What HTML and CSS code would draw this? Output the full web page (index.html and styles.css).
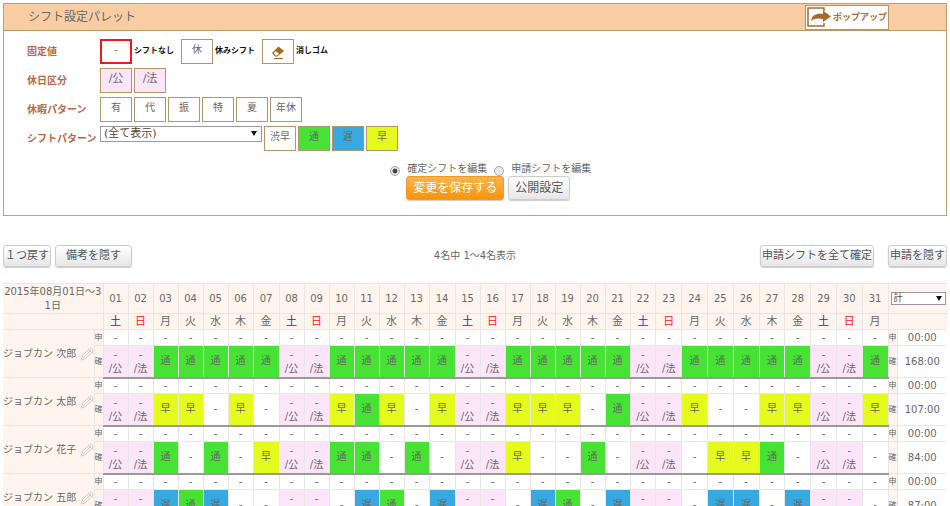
FILE: index.html
```html
<!DOCTYPE html>
<html lang="ja">
<head>
<meta charset="utf-8">
<title>シフト設定パレット</title>
<link rel="stylesheet" href="styles.css">
</head>
<body>
<section class="panel">
  <header class="panel-head">
    <h1>シフト設定パレット</h1>
    <button class="popup" type="button">
      <svg viewBox="0 0 24 20" width="24" height="20" aria-hidden="true">
        <path d="M17 4V1H1V19H17V16" fill="none" stroke="#a66a2c" stroke-width="1.5"/>
        <path d="M4 14C5 8 9 6 16 7V3.500L24 9.500L16 15V12C11 11 7 11 4 14Z" fill="#a66a2c"/>
      </svg>
      <span>ポップアップ</span>
    </button>
  </header>
  <div class="palette">
    <div class="line">
      <h2>固定値</h2>
      <div class="tiles">
        <button class="tile selected" type="button">-</button><span class="note">シフトなし</span>
        <button class="tile" type="button">休</button><span class="note">休みシフト</span>
        <button class="tile" type="button" aria-label="消しゴム">
          <svg viewBox="0 0 14 14" width="14" height="14" aria-hidden="true">
            <path d="M1 8L7.500 1.500L13 6L6.500 11.500H4Z" fill="#a8661f"/>
            <path d="M2.800 8L4.800 6.200L8.200 8.800L6.200 10.500H4.600Z" fill="#fff"/>
            <path d="M3 13.500H12" stroke="#a8661f"/>
          </svg>
        </button><span class="note">消しゴム</span>
      </div>
    </div>
    <div class="line">
      <h2>休日区分</h2>
      <div class="tiles">
        <button class="tile off" type="button">/公</button>
        <button class="tile off" type="button">/法</button>
      </div>
    </div>
    <div class="line">
      <h2>休暇パターン</h2>
      <div class="tiles">
        <button class="tile" type="button">有</button>
        <button class="tile" type="button">代</button>
        <button class="tile" type="button">振</button>
        <button class="tile" type="button">特</button>
        <button class="tile" type="button">夏</button>
        <button class="tile" type="button">年休</button>
      </div>
    </div>
    <div class="line">
      <h2><label for="pattern">シフトパターン</label></h2>
      <div class="tiles">
        <span class="select pattern"><select id="pattern"><option>(全て表示)</option></select></span>
        <button class="tile" type="button">渋早</button>
        <button class="tile normal" type="button">通</button>
        <button class="tile late" type="button">遅</button>
        <button class="tile early" type="button">早</button>
      </div>
    </div>
  </div>
  <form class="save">
    <div class="modes">
      <input type="radio" name="mode" id="fixed" checked><label for="fixed">確定シフトを編集</label>
      <input type="radio" name="mode" id="request"><label for="request">申請シフトを編集</label>
    </div>
    <div class="actions">
      <button class="button primary" type="button">変更を保存する</button>
      <button class="button large" type="button">公開設定</button>
    </div>
  </form>
</section>

<div class="toolbar">
  <div class="group">
    <button class="button" type="button">１つ戻す</button>
    <button class="button roomy" type="button">備考を隠す</button>
  </div>
  <p>4名中 1〜4名表示</p>
  <div class="group end">
    <button class="button" type="button">申請シフトを全て確定</button>
    <button class="button" type="button">申請を隠す</button>
  </div>
</div>

<table class="shifts">
  <colgroup id="cols"></colgroup>
  <thead>
    <tr class="dates" id="dates"></tr>
    <tr class="weekdays" id="weekdays"></tr>
  </thead>
  <tbody id="staff"></tbody>
</table>
<script src="shifts.js"></script>
</body>
</html>
```
FILE: styles.css
```css
* { box-sizing: border-box; }

body {
  margin: 3px;
  background: #fff;
  color: #686868;
  font: 10px/14px "DejaVu Sans", "Noto Sans CJK JP", sans-serif;
}

h1, h2, p { margin: 0; font-size: 10px; font-weight: normal; }

button, select, input { font: inherit; color: inherit; margin: 0; }

button { padding: 0; white-space: nowrap; cursor: pointer; }

.panel { border: 1px solid #c0a070; padding-bottom: 15px; }

.panel-head {
  display: flex;
  align-items: center;
  justify-content: space-between;
  height: 27px;
  padding: 0 57px 0 24px;
  background: #f9cda3;
  border-bottom: 1px solid #c09660;
}

.panel-head h1 { font-size: 12px; line-height: 18px; }

.popup {
  display: flex;
  align-items: center;
  gap: 2px;
  height: 25px;
  padding: 0 1px;
  background: #fff;
  border: 1px solid #b59466;
  color: #a66a2c;
  font-size: 9px;
  font-weight: bold;
}

.palette { padding: 8px 0 0 23px; }

.line { display: flex; height: 29px; }

.line h2 {
  width: 73px;
  color: #b8694a;
  font-weight: bold;
  line-height: 25px;
  white-space: nowrap;
}

.tiles { display: flex; gap: 2px; }

.tile {
  display: flex;
  align-items: center;
  justify-content: center;
  width: 32px;
  height: 25px;
  padding-bottom: 3px;
  background: #fff;
  border: 1px solid #b39568;
}

.tile svg { margin-top: 3px; }

.tile.selected { border: 2px solid #f01818; }

.off { background: #fde5f9; font-size: 11px; }
.normal { background: #46e234; }
.late { background: #38a9e0; }
.early { background: #e5fb1e; }

.note {
  margin-right: 5px;
  color: #111;
  font-size: 8px;
  font-weight: bold;
  line-height: 23px;
}

.select { position: relative; display: block; }

.select select {
  display: block;
  width: 100%;
  appearance: none;
  background: #fff;
  border: 1px solid #999;
  border-radius: 0;
  color: #57452c;
}

.select::after {
  content: "";
  position: absolute;
  top: 5px;
  right: 5px;
  border: 3px solid transparent;
  border-top: 5px solid #111;
  border-bottom: 0;
  pointer-events: none;
}

.pattern { width: 162px; }

.pattern select { height: 16px; padding: 0 3px; font-size: 11px; line-height: 14px; }

.save { padding: 6px 0 0 41%; }

.modes { display: flex; align-items: center; height: 15px; }

.modes input {
  appearance: none;
  width: 10px;
  height: 10px;
  margin-top: 4px;
  border: 1px solid #aaa;
  border-radius: 50%;
  background: #e8e8e8;
}

.modes input:checked { background: radial-gradient(#444 35%, #e8e8e8 50%); }

.modes label { margin: 0 7px; }

.actions { display: flex; gap: 4px; padding-left: 16px; }

.button {
  height: 22px;
  padding: 0 1px;
  background: linear-gradient(#fff, #e6e6e6);
  border: 1px solid #ccc;
  border-radius: 3px;
  box-shadow: 0 1px 1px #ccc;
  color: #555;
  font-size: 11px;
}

.large, .primary { height: 24px; padding: 0 6px; font-size: 12px; }

.primary {
  background: linear-gradient(#fbb450, #f89406);
  border-color: #f09a28;
  color: #fff;
}

.roomy { padding: 0 10px; }

.toolbar {
  display: grid;
  grid-template-columns: 1fr auto 1fr;
  align-items: center;
  margin: 29px 0 16px;
}

.group { display: flex; gap: 4px; }

.end { justify-content: flex-end; gap: 14px; }

.shifts {
  width: 100%;
  border-collapse: collapse;
  table-layout: fixed;
  text-align: center;
}

.shifts th, .shifts td {
  padding: 0;
  border: 1px solid #e9e7e6;
  font-weight: normal;
}

.shifts tr > :first-child { border-left: 0; }

.shifts .total { border-right: 0; }

.col-name { width: 91px; }
.col-kind { width: 9px; }
.col-day { width: 25px; }
.col-day-wide { width: 26px; }
.col-total { width: 50px; }

.dates { height: 30px; }
.weekdays, .requested { height: 16px; }
.confirmed { height: 32px; }

.shifts thead th, .shifts .name, .shifts .kind { background: #fff5ee; }

.shifts .weekdays th { font-size: 11px; line-height: 14px; }

.shifts .sat { color: #2020f0; }
.shifts .sun { color: #f02020; }

.shifts .name { text-align: left; }

.person { display: flex; align-items: center; justify-content: space-between; white-space: nowrap; }

.shifts .kind { font-size: 8px; line-height: 12px; }

.shifts .total-head { padding: 0 1px 0 2px; }

.total-head select { height: 13px; padding: 0 2px; font-size: 9px; line-height: 11px; }

.total-head .select::after { top: 4px; right: 4px; }

.shifts .day { line-height: 14px; }

.shifts .requested .day { line-height: 12px; }

.shifts .confirmed .day { border-bottom: 2px solid #999; }

.shifts .confirmed .off { padding-top: 1px; font-size: 10px; }
```
FILE: shifts.js
```js
const DAYS = 31;
const WEEK = ["土", "日", "月", "火", "水", "木", "金"];
const STYLE = { "通": "normal", "遅": "late", "早": "early" };

// One character per working day; weekends are filled in from the calendar.
const STAFF = [
  { name: "ジョブカン 次郎", total: "168:00", shifts: "通通通通通 通通通通通 通通通通通 通通通通通 通" },
  { name: "ジョブカン 太郎", total: "107:00", shifts: "早早-早- 早通早-早 早早早-通 早--早早 早" },
  { name: "ジョブカン 花子", total: "84:00", shifts: "通-通-早 通通-通- 早--通- -早早通- -" },
  { name: "ジョブカン 五郎", total: "87:00", shifts: "遅通遅-- -遅通-遅 -遅通-遅 -遅遅-遅 -" }
];

const PENCIL = `<svg viewBox="0 0 14 14" width="14" height="14" fill="none" stroke="#cfc9c4" aria-hidden="true">
  <path d="M1 13L2 9L9.500 1.500Q10.500 .5 11.500 1.500L12.500 2.500Q13.500 3.500 12.500 4.500L5 12ZM2 9L5 12M3.500 10.500L11 3M8.500 2.500L11.500 5.500"/></svg>`;

const days = Array.from({ length: DAYS }, (_, i) => i);
const byId = id => document.getElementById(id);
const each = fn => days.map(fn).join("");

byId("cols").outerHTML = `<colgroup><col class="col-name"><col class="col-kind">` +
  each(i => `<col class="${i > 20 ? "" : i === 6 || i === 13 ? "col-day-wide" : "col-day"}">`) +
  `<col class="col-kind"><col class="col-total"></colgroup>`;

byId("dates").innerHTML = `<th colspan="2">2015年08月01日〜3<br>1日</th>` +
  each(i => `<th>${String(i + 1).padStart(2, "0")}</th>`) +
  `<th class="total total-head" colspan="2"><span class="select"><select aria-label="集計"><option>計</option></select></span></th>`;

byId("weekdays").innerHTML = `<th colspan="2"></th>` +
  each(i => `<th class="${["sat", "sun"][i % 7] || ""}">${WEEK[i % 7]}</th>`) +
  `<th class="total" colspan="2"></th>`;

byId("staff").innerHTML = STAFF.map(({ name, total, shifts }) => {
  const queue = [...shifts.replace(/ /g, "")];
  const confirmed = each(i => {
    if (i % 7 < 2) return `<td class="day off">-<br>${i % 7 ? "/法" : "/公"}</td>`;
    const shift = queue.shift();
    return `<td class="day ${STYLE[shift] || ""}">${shift}</td>`;
  });
  return `<tr class="requested"><th class="name" rowspan="2"><div class="person">${name}${PENCIL}</div></th>
    <td class="kind">申</td>${each(() => `<td class="day">-</td>`)}<td class="kind">申</td><td class="total">00:00</td></tr>
    <tr class="confirmed"><td class="kind">確</td>${confirmed}<td class="kind">確</td><td class="total">${total}</td></tr>`;
}).join("");
```
